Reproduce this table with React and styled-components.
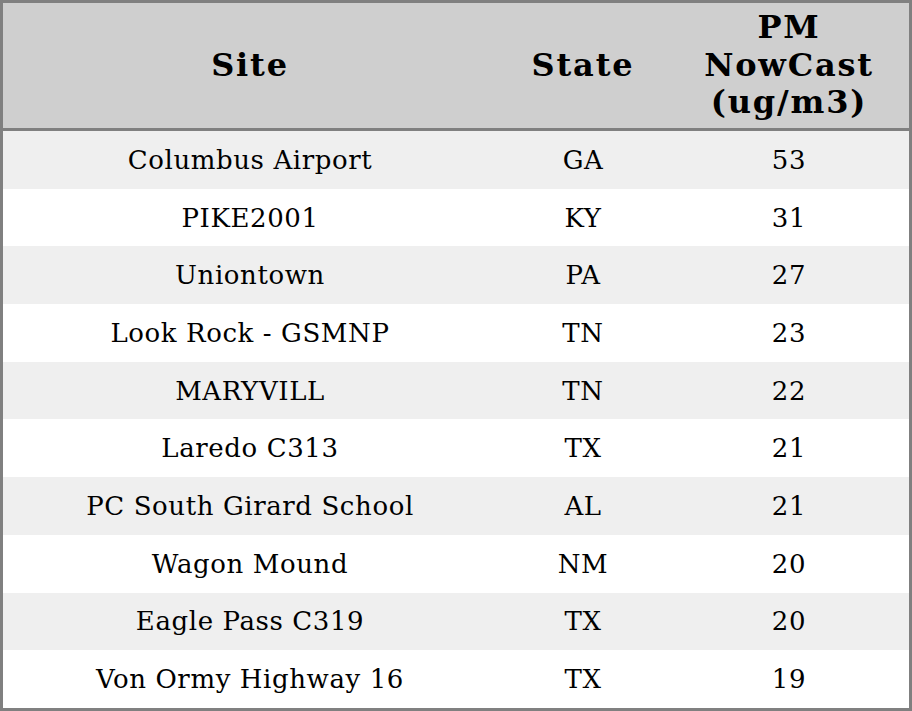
import React from "react";
import styled, { createGlobalStyle } from "styled-components";

const Global = createGlobalStyle`
  html, body { margin: 0; padding: 0; background: #ffffff; }
  body { font-family: "DejaVu Serif", "Liberation Serif", serif; }
`;

const Frame = styled.div`
  width: 912px;
  height: 711px;
  box-sizing: border-box;
  border: 3px solid #808080;
  background: #ffffff;
`;

const Table = styled.table`
  width: 100%;
  border-collapse: separate;
  border-spacing: 0;
  table-layout: fixed;
  font-family: "DejaVu Serif", "Liberation Serif", serif;
  color: #000;
`;

const HeadCell = styled.th`
  height: 125px;
  padding: 0 10px;
  box-sizing: content-box;
  background: #cfcfcf;
  border-bottom: 3px solid #808080;
  font-size: 32px;
  font-weight: bold;
  letter-spacing: 1.8px;
  line-height: 37.5px;
  text-align: center;
  vertical-align: middle;
`;

const Row = styled.tr`
  height: 57.7px;
  background: ${(p) => (p.$shaded ? "#efefef" : "#ffffff")};
`;

const Cell = styled.td`
  padding: 0;
  font-size: 26px;
  letter-spacing: 0.6px;
  text-align: center;
  vertical-align: middle;
  white-space: nowrap;
`;

const rows = [
  ["Columbus Airport", "GA", "53"],
  ["PIKE2001", "KY", "31"],
  ["Uniontown", "PA", "27"],
  ["Look Rock - GSMNP", "TN", "23"],
  ["MARYVILL", "TN", "22"],
  ["Laredo C313", "TX", "21"],
  ["PC South Girard School", "AL", "21"],
  ["Wagon Mound", "NM", "20"],
  ["Eagle Pass C319", "TX", "20"],
  ["Von Ormy Highway 16", "TX", "19"],
];

export default function App() {
  return (
    <>
      <Global />
      <Frame>
        <Table>
          <colgroup>
            <col style={{ width: 494 }} />
            <col style={{ width: 172 }} />
            <col style={{ width: 240 }} />
          </colgroup>
          <thead>
            <tr>
              <HeadCell>Site</HeadCell>
              <HeadCell>State</HeadCell>
              <HeadCell>PM NowCast (ug/m3)</HeadCell>
            </tr>
          </thead>
          <tbody>
            {rows.map((r, i) => (
              <Row key={i} $shaded={i % 2 === 0}>
                <Cell>{r[0]}</Cell>
                <Cell>{r[1]}</Cell>
                <Cell>{r[2]}</Cell>
              </Row>
            ))}
          </tbody>
        </Table>
      </Frame>
    </>
  );
}
